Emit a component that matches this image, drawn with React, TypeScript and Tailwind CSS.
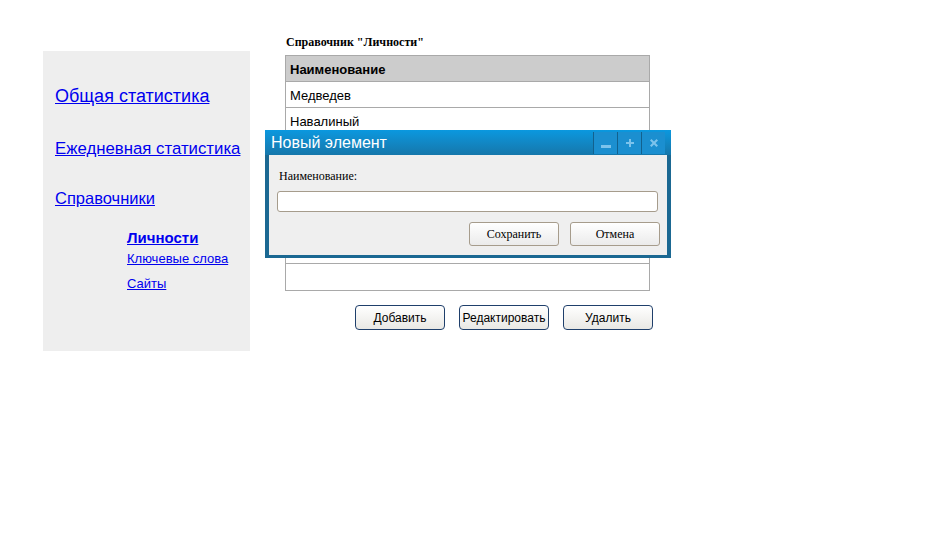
import React from 'react';

const rows = ['Медведев', 'Навалиный', '', '', '', '', '', ''];

const Sidebar: React.FC = () => (
  <div className="w-[207px] h-[300px] bg-[#eeeeee] mt-[51px] ml-[43px] shrink-0 font-['Liberation_Sans',Arial,sans-serif]">
    <div className="pl-[12px] pt-[34px] flex flex-col items-start">
      <a href="#" className="text-[18px] leading-[22px] text-[#0000ee] underline">Общая статистика</a>
      <a href="#" className="mt-[31px] text-[16.8px] leading-[22px] text-[#0000ee] underline">Ежедневная статистика</a>
      <a href="#" className="mt-[27px] text-[16.5px] leading-[22px] text-[#0000ee] underline">Справочники</a>
    </div>
    <div className="pl-[84px] pt-[20px] flex flex-col items-start">
      <a href="#" className="text-[15px] leading-[18px] font-bold text-[#0000ee] underline">Личности</a>
      <a href="#" className="mt-[4px] text-[13px] leading-[16px] text-[#0000ee] underline">Ключевые слова</a>
      <a href="#" className="mt-[9px] text-[13px] leading-[16px] text-[#0000ee] underline">Сайты</a>
    </div>
  </div>
);

const PageButton: React.FC<{ label: string }> = ({ label }) => (
  <button className="w-[90px] h-[25px] shrink-0 rounded-[4px] border border-[#1f3f6b] bg-gradient-to-b from-white to-[#e9e8e4] text-[12px] text-black font-['Liberation_Sans',Arial,sans-serif]">
    {label}
  </button>
);

const Dialog: React.FC = () => (
  <div className="absolute left-[265px] top-[130px] w-[406px] h-[128px] bg-[#1b6892] px-[4px] pb-[3px] flex flex-col">
    <div className="-mx-[4px] h-[25px] bg-gradient-to-b from-[#0a98df] to-[#1577ab] flex items-center pl-[6px]">
      <span className="text-white text-[16px] font-['Liberation_Sans',Arial,sans-serif] flex-1">Новый элемент</span>
      <div className="flex h-full pt-[2px] pb-[1px] pr-[6px]">
        {['min', 'max', 'close'].map(k => (
          <div key={k} className="w-[24px] h-full border-l border-[#12618e] bg-[#1b8fd0] flex items-center justify-center">
            {k === 'min' && <svg width="12" height="12" viewBox="0 0 12 12"><rect x="1" y="8" width="10" height="3" fill="#7cc3ec" /></svg>}
            {k === 'max' && <svg width="10" height="10" viewBox="0 0 10 10"><path d="M4 1h2v3h3v2H6v3H4V6H1V4h3z" fill="#7cc3ec" /></svg>}
            {k === 'close' && <svg width="10" height="10" viewBox="0 0 10 10"><path d="M1 2.5L2.5 1 5 3.5 7.5 1 9 2.5 6.5 5 9 7.5 7.5 9 5 6.5 2.5 9 1 7.5 3.5 5z" fill="#7cc3ec" /></svg>}
          </div>
        ))}
      </div>
    </div>
    <div className="flex-1 bg-[#efefef] pl-[8px] pr-[9px] font-['Liberation_Serif','Times_New_Roman',serif]">
      <div className="pt-[14px] text-[12px] leading-[14px] text-black pl-[2px]">Наименование:</div>
      <div className="mt-[8px] h-[21px] rounded-[3px] border border-[#a69c8c] bg-white" />
      <div className="mt-[10px] flex justify-end gap-[11px] -mr-[2px]">
        <button className="w-[90px] h-[24px] rounded-[3px] border border-[#a69c8c] bg-gradient-to-b from-white to-[#ebebeb] text-[12px] text-black">Сохранить</button>
        <button className="w-[90px] h-[24px] rounded-[3px] border border-[#a69c8c] bg-gradient-to-b from-white to-[#ebebeb] text-[12px] text-black">Отмена</button>
      </div>
    </div>
  </div>
);

const App: React.FC = () => {
  return (
    <div className="relative w-[932px] h-[537px] bg-white flex">
      <Sidebar />
      <div className="ml-[35px] pt-[34px] w-[365px]">
        <div className="text-[12px] leading-[16px] font-bold font-['Liberation_Serif','Times_New_Roman',serif] pl-[1px]">Справочник "Личности"</div>
        <div className="mt-[5px] border border-[#a9a9a9] font-['Liberation_Sans',Arial,sans-serif]">
          <div className="h-[26px] bg-[#cccccc] border-b border-[#a9a9a9] flex items-center px-[4px] pt-[2px] text-[13px] font-bold">Наименование</div>
          {rows.map((r, i) => (
            <div key={i} className={`h-[26px] flex items-center px-[4px] pt-[3px] text-[13px] ${i < rows.length - 1 ? 'border-b border-[#a9a9a9]' : ''}`}>{r}</div>
          ))}
        </div>
        <div className="mt-[14px] flex gap-[14px] pl-[70px]">
          <PageButton label="Добавить" />
          <PageButton label="Редактировать" />
          <PageButton label="Удалить" />
        </div>
      </div>
      <Dialog />
    </div>
  );
};

export default App;
